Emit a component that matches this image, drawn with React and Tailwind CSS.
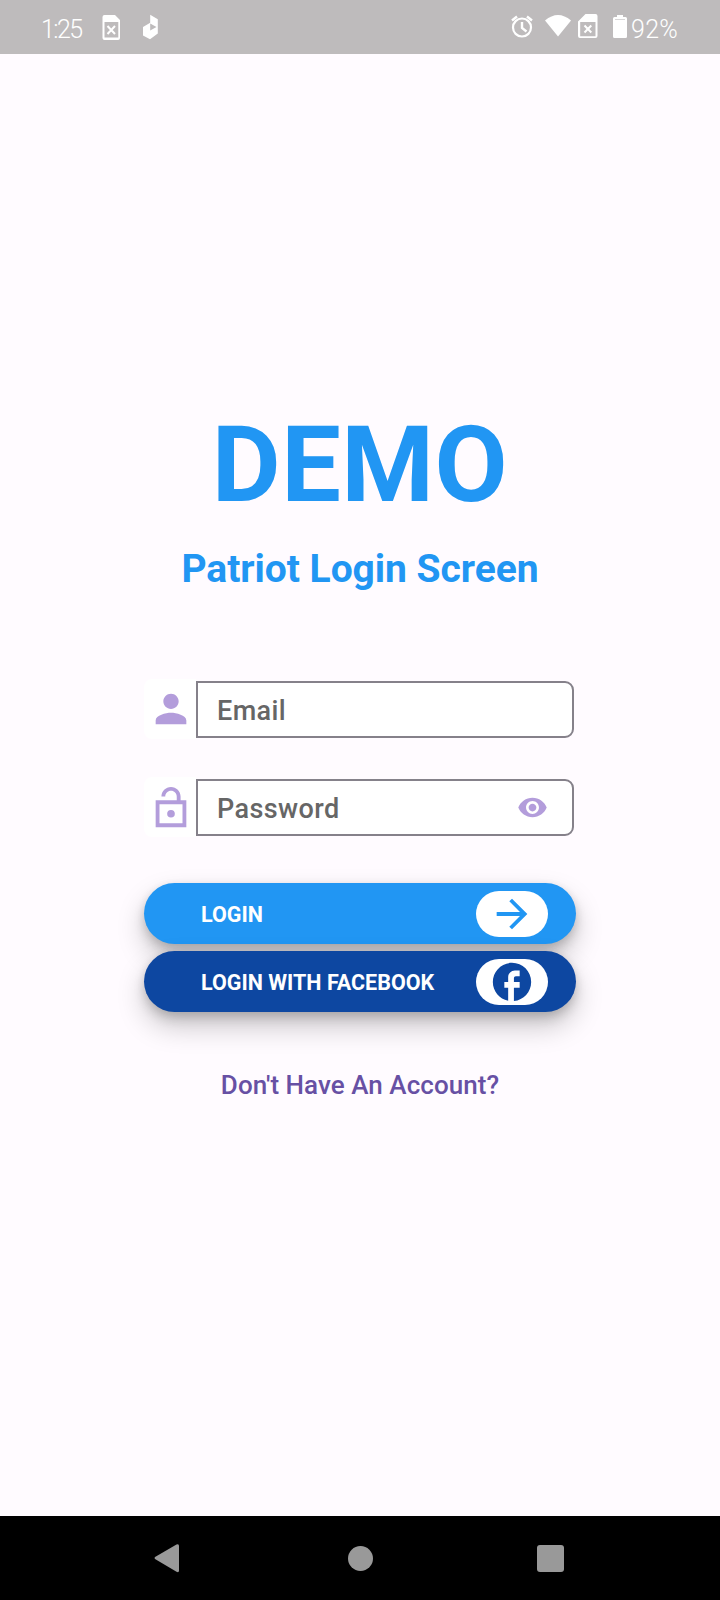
import React from "react";
import { MdPerson, MdVisibility, MdArrowForward, MdFacebook } from "react-icons/md";

function LockOpen() {
  return (
    <svg viewBox="0 0 24 24" className="mt-px size-[46px]" fill="currentColor">
      <path fillRule="evenodd" d="M12 1C9.24 1 7 3.24 7 6h2c0-1.66 1.34-3 3-3s3 1.34 3 3v2H4v14h16V8h-3V6c0-2.76-2.24-5-5-5zM18 20H6V10h12zM12 13a2 2 0 1 0 0 4 2 2 0 0 0 0-4z" />
    </svg>
  );
}

function StatusBar() {
  return (
    <header className="flex h-[54px] items-center bg-[#bebbbc] pl-[41px] pr-[42px] text-[25px] font-light leading-none text-white">
      <span className="w-[59px] pt-[4px] tracking-[-1.600px]">1:25</span>
      <svg className="h-[54px] w-[60px]" viewBox="100 0 60 54" fill="#fff">
        <path fillRule="evenodd" d="M104.500 15H115L120 20V38Q120 40 118 40H104.500Q102.500 40 102.500 38V17Q102.500 15 104.500 15zM104.500 22V37.500H118.300V22z" />
        <path d="M107.500 26l7.500 8M115 26l-7.500 8" stroke="#fff" strokeWidth="2" />
        <path d="M150.200 14.800L157.800 19.200V33.500L150 39.200L143 35.500V27L150.200 22.800z" />
        <path d="M150.200 23.500V30.500L156.500 27z" fill="#bebbbc" />
      </svg>
      <svg className="ml-auto h-[54px] w-[120px]" viewBox="510 0 120 54" fill="#fff">
        <circle cx="522" cy="27.500" r="9" fill="none" stroke="#fff" strokeWidth="2.200" />
        <path d="M522 22v6l4.500 3.500M512 20.500l5-4M532 20.500l-5-4" fill="none" stroke="#fff" strokeWidth="2.400" />
        <path d="M545 20.500Q558 9.500 571 20.500L558 36.500z" />
        <path fillRule="evenodd" d="M585.500 14H595.500Q597.500 14 597.500 16V36Q597.500 38 595.500 38H580Q578 38 578 36V21.500zM580.200 22V36.300H595.500V22z" />
        <path d="M584.500 25.500l6.800 7M591.300 25.500l-6.800 7" stroke="#fff" strokeWidth="2" />
        <path d="M617 15h6v2h2.500q1.500 0 1.500 1.500V36.500q0 1.500-1.500 1.500H614.500q-1.500 0-1.500-1.500V18.500q0-1.500 1.500-1.500H617z" />
        <path d="M615 19.500h10" stroke="#d8d6d7" strokeWidth="1" />
      </svg>
      <span className="w-[48px] whitespace-nowrap pl-px pt-[4px] tracking-[0.3px]">92%</span>
    </header>
  );
}

function Field({ icon, label, trailing }) {
  return (
    <div className="flex h-[60px] w-[432px] pr-[2px]">
      <div className="flex h-full w-[52px] items-center rounded-l-lg bg-white pl-[4px] text-[#b39ddb]">{icon}</div>
      <div className="mt-[2px] flex h-[57px] flex-1 items-center justify-between rounded-r-[9px] border-2 border-[#85818a] bg-white pl-[19px] pr-[24px]">
        <span className="pt-[4px] text-[27px] font-medium leading-none tracking-[0.4px] text-[#666]">{label}</span>
        <span className="text-[#b39ddb]">{trailing}</span>
      </div>
    </div>
  );
}

function PillButton({ label, icon, tone }) {
  return (
    <button className={`flex h-[61px] w-[432px] items-center justify-between rounded-full pl-[57px] pr-[28px] shadow-[0_14px_28px_rgba(0,0,0,0.22),0_6px_12px_rgba(0,0,0,0.14),0_2px_8px_rgba(0,0,0,0.06)] ${tone}`}>
      <span className="pt-px text-[21.500px] font-bold leading-none text-white">{label}</span>
      <span className="flex h-[46px] w-[72px] items-center justify-center rounded-full bg-white">{icon}</span>
    </button>
  );
}

export default function App() {
  return (
    <div className="flex h-[1600px] w-[720px] flex-col bg-[#fffbff] font-['Roboto',sans-serif]">
      <StatusBar />
      <main className="flex flex-1 flex-col items-center">
        <h1 className="mt-[356px] text-[106px] font-bold leading-[110px] tracking-[0.500px] text-[#2196f3]">DEMO</h1>
        <h2 className="mt-[26px] text-[39px] font-bold leading-[46px] tracking-[-0.050px] text-[#2196f3]">Patriot Login Screen</h2>
        <div className="mt-[87px] flex flex-col gap-[38px]">
          <Field label="Email" icon={<MdPerson className="size-[46px]" />} />
          <Field label="Password" icon={<LockOpen />} trailing={<MdVisibility className="size-[31px]" />} />
        </div>
        <div className="mt-[46.300px] flex flex-col gap-[7.200px]">
          <PillButton label="LOGIN" tone="bg-[#2196f3]" icon={<MdArrowForward className="size-[46px] text-[#2196f3]" />} />
          <PillButton label="LOGIN WITH FACEBOOK" tone="bg-[#0d47a1]" icon={<MdFacebook className="size-[46px] text-[#0d47a1]" />} />
        </div>
        <a className="mt-[57.500px] text-[26px] font-medium leading-[30px] tracking-[0.050px] text-[#6750a4]">Don't Have An Account?</a>
      </main>
      <nav className="flex h-[84px] items-center justify-between bg-black pl-[154px] pr-[156px]">
        <svg className="h-[30px] w-[25px]" viewBox="0 0 25 30" fill="#999">
          <path d="M1 14Q0 15 1 16L22.500 28.700Q25 30 25 27.500V3Q25 .3 22.500 1.500z" />
        </svg>
        <span className="ml-[4px] size-[25px] rounded-full bg-[#999]" />
        <span className="size-[27px] rounded-[3px] bg-[#999]" />
      </nav>
    </div>
  );
}
